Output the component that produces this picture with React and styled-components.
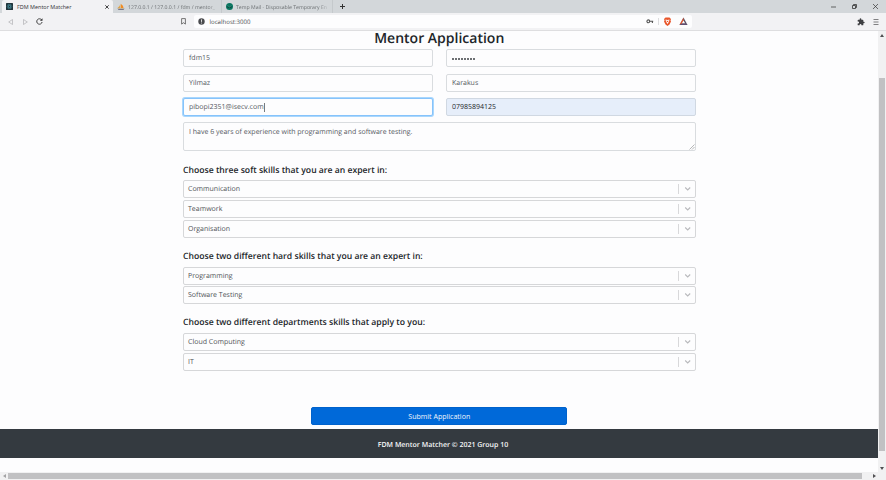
import React from 'react';
import styled, { createGlobalStyle, css } from 'styled-components';

const GlobalStyle = createGlobalStyle`
  * { box-sizing: border-box; }
  html, body { margin: 0; overflow: hidden; }
  body {
    font-family: 'Open Sans', 'Noto Sans', sans-serif;
    color: #212529;
    background: #fdfdfe;
    text-rendering: geometricPrecision;
  }
  svg { display: block; flex: none; }
`;

const Browser = styled.div`
  width: 886px;
  height: 480px;
  display: flex;
  flex-direction: column;
`;

const TabBar = styled.div`
  display: flex;
  flex: none;
  height: 13px;
  background: #d3d7da;
`;

const Tab = styled.div`
  display: flex;
  align-items: center;
  gap: ${(p) => (p.$active ? 4 : 3)}px;
  width: ${(p) => p.$width}px;
  height: 13px;
  padding: 0 4px 0 4px;
  white-space: nowrap;
  font-size: ${(p) => (p.$active ? 5.46 : 5.17)}px;
  color: ${(p) => (p.$active ? '#333437' : '#6c7073')};
  ${(p) =>
    p.$active
      ? css`background: #f2f2f4; border-radius: 2px 2px 0 0; margin-left: 2px;`
      : css`box-shadow: inset -1px 0 #c5c9cc;`}
`;

const TabTitle = styled.span`
  flex: 1;
  padding-top: 1px;
  line-height: 13px;
  ${(p) => p.$fade && css`mask-image: linear-gradient(to right, #000 88%, transparent 102%);`}
`;

const NewTab = styled.div`
  display: flex;
  align-items: center;
  padding-left: 7px;
`;

const WindowControls = styled.div`
  display: flex;
  align-items: center;
  gap: 16px;
  margin-left: auto;
  padding-right: 8px;
`;

const Toolbar = styled.div`
  display: flex;
  align-items: center;
  flex: none;
  height: 18px;
  padding: 0 7px 0 8px;
  background: #f2f2f4;
  border-bottom: 1px solid #dedee0;
`;

const NavButtons = styled.div`
  display: flex;
  align-items: center;
  gap: 8px;
  width: 173px;
`;

const AddressBar = styled.div`
  display: flex;
  align-items: center;
  width: 498px;
  height: 13px;
  margin-left: 8px;
  padding: 0 4px 0 4px;
  border-radius: 2px;
  background: #fdfdfe;
`;

const Url = styled.span`
  margin-left: 4.5px;
  padding-top: 1px;
  font-size: 6.08px;
  line-height: 13px;
  color: #4b4d50;
`;

const AddressIcons = styled.div`
  display: flex;
  align-items: center;
  gap: 4px;
  margin-left: auto;
`;

const IconDivider = styled.div`
  width: 1px;
  height: 7px;
  background: #dcdcde;
`;

const ShieldIcons = styled.div`
  display: flex;
  gap: 7px;
`;

const ToolbarEnd = styled.div`
  display: flex;
  align-items: center;
  gap: 8px;
  margin-left: auto;
`;

const Viewport = styled.div`
  display: flex;
  flex: 1;
  min-height: 0;
`;

const Page = styled.div`
  width: 878px;
  display: flex;
  flex-direction: column;
`;

const Form = styled.form`
  display: flex;
  flex-direction: column;
  width: 512.5px;
  height: 398px;
  margin-left: 183px;
`;

const Title = styled.h1`
  margin: -2px 0 0;
  height: 20px;
  font-size: 14px;
  font-weight: 600;
  line-height: 20px;
  text-align: center;
`;

const FieldGrid = styled.div`
  display: grid;
  grid-template-columns: 250px 249.5px;
  column-gap: 13px;
  grid-template-rows: 25px 24px 18px;
`;

const fieldStyle = css`
  border: 1px solid #d9dcdf;
  border-radius: 2px;
  background: #fdfdfe;
  font-family: inherit;
  font-size: 7px;
  color: #55595e;
`;

const Field = styled.div`
  ${fieldStyle}
  display: flex;
  align-items: center;
  height: 18px;
  padding: 1px 5px 0;
  line-height: 15px;
  ${(p) => p.$masked && css`gap: 1px;`}
  ${(p) => p.$focused && css`border-color: #86c3fb; box-shadow: 0 0 0 1px #a9d7fd;`}
  ${(p) => p.$autofilled && css`background: #e6eefa; border-color: #d0d8e2; color: #25292d;`}
`;

const Caret = styled.span`
  width: 1px;
  height: 9px;
  background: #777b7f;
`;

const PasswordDot = styled.span`
  width: 2px;
  height: 2px;
  border-radius: 50%;
  background: #3c4045;
`;

const Bio = styled.div`
  ${fieldStyle}
  display: flex;
  flex: none;
  justify-content: space-between;
  height: 29px;
  margin-top: 6px;
  padding: 5px 0 0 5px;
  line-height: 10px;
`;

const ResizeGrip = styled.svg`
  align-self: flex-end;
`;

const Section = styled.section`
  display: flex;
  flex-direction: column;
  margin-top: ${(p) => p.$top}px;
`;

const SectionTitle = styled.h2`
  margin: 0 0 ${(p) => p.$after}px;
  font-size: 8.65px;
  font-weight: 600;
  line-height: 12px;
`;

const SelectList = styled.div`
  display: grid;
  row-gap: ${(p) => p.$gap}px;
`;

const SelectBox = styled.div`
  display: flex;
  align-items: center;
  height: 18px;
  padding: 0 3px 0 4px;
  border: 1px solid #d6d7d9;
  border-radius: 2px;
  font-size: 7px;
  line-height: 15px;
  color: #505357;
`;

const SelectValue = styled.span`
  padding-top: 1px;
`;

const SelectDivider = styled.span`
  width: 1px;
  height: 10px;
  margin: 0 5px 0 auto;
  background: #d8d8da;
`;

const SubmitButton = styled.button`
  align-self: center;
  width: 256px;
  height: 18px;
  margin-top: auto;
  margin-bottom: 4px;
  padding: 0;
  border: 1px solid #0062cc;
  border-radius: 2px;
  background: #0069d9;
  color: #f0f6fc;
  font-family: inherit;
  font-size: 7.05px;
  line-height: 15px;
`;

const Footer = styled.footer`
  height: 29px;
  padding: 2px 0 0 8px;
  background: #343a40;
  color: #f7f8f9;
  font-size: 7px;
  font-weight: 600;
  line-height: 29px;
  text-align: center;
`;

const VerticalScroll = styled.div`
  display: flex;
  flex-direction: column;
  align-items: center;
  justify-content: space-between;
  width: 8px;
  padding: 3px 0 2px;
  background: #f1f1f2;
`;

const VerticalThumb = styled.div`
  width: 6px;
  height: 373px;
  margin: 39.5px 0 auto;
  background: #c1c1c3;
`;

const HorizontalScroll = styled.div`
  display: flex;
  align-items: center;
  flex: none;
  height: 8px;
  padding: 0 10px 0 3px;
  background: #f1f1f2;
`;

const HorizontalThumb = styled.div`
  width: 854px;
  height: 6px;
  margin: 0 auto 0 1px;
  background: #c1c1c3;
`;

const Arrow = ({ dir }) => {
  const paths = { up: 'M0 3 2 0l2 3z', down: 'M0 1h4L2 4z', left: 'M3 0v4L0 2z', right: 'M1 0v4l3-2z' };
  return (
    <svg width="4" height="4" viewBox="0 0 4 4">
      <path d={paths[dir]} fill={dir === 'left' ? '#a3a3a5' : '#505052'} />
    </svg>
  );
};

const ReactFavicon = () => (
  <svg width="7" height="7" viewBox="0 0 14 14">
    <rect width="14" height="14" rx="1" fill="#20343b" />
    <g fill="none" stroke="#4e9eac" strokeWidth=".8">
      <ellipse cx="7" cy="7" rx="5" ry="2" />
      <ellipse cx="7" cy="7" rx="5" ry="2" transform="rotate(60 7 7)" />
      <ellipse cx="7" cy="7" rx="5" ry="2" transform="rotate(120 7 7)" />
    </g>
  </svg>
);

const SailFavicon = () => (
  <svg width="8" height="8" viewBox="0 0 16 16">
    <path d="M7 1v9H1Q6 7 7 1z" fill="#dfa44c" />
    <path d="M8 2q5 3 5 8H8z" fill="#f28b22" />
    <path d="M1 11h14l-2 3H3z" fill="#77758a" />
    <path d="M1 11h13" stroke="#e2c481" />
  </svg>
);

const MailFavicon = () => (
  <svg width="7" height="7" viewBox="0 0 14 14">
    <circle cx="7" cy="7" r="7" fill="#08745f" />
    <path d="m3 5 4 3 4-3v5H3z" fill="#0b4d45" />
    <path d="m3 5 4 3 4-3" fill="none" stroke="#48b99c" />
  </svg>
);

const Chevron = () => (
  <svg width="8" height="6" viewBox="0 0 8 6">
    <path d="m1.2 1.5 2.5 2.4 2.5-2.4" fill="none" stroke="#b8b9bc" strokeWidth="1.1" />
  </svg>
);

const Select = ({ value }) => (
  <SelectBox>
    <SelectValue>{value}</SelectValue>
    <SelectDivider />
    <Chevron />
  </SelectBox>
);

const SkillSection = ({ title, options, top = 12, after = 5, gap = 2 }) => (
  <Section $top={top}>
    <SectionTitle $after={after}>{title}</SectionTitle>
    <SelectList $gap={gap}>
      {options.map((option) => <Select key={option} value={option} />)}
    </SelectList>
  </Section>
);

const BrowserTabs = () => (
  <TabBar>
    <Tab $active $width={111}>
      <ReactFavicon />
      <TabTitle>FDM Mentor Matcher</TabTitle>
      <svg width="4" height="4" viewBox="0 0 4 4"><path d="m.3.3 3.4 3.4M3.7.3.3 3.7" stroke="#333" strokeWidth=".9" /></svg>
    </Tab>
    <Tab $width={109}>
      <SailFavicon />
      <TabTitle $fade>127.0.0.1 / 127.0.0.1 / fdm / mentor_</TabTitle>
    </Tab>
    <Tab $width={111}>
      <MailFavicon />
      <TabTitle $fade>Temp Mail - Disposable Temporary En</TabTitle>
    </Tab>
    <NewTab>
      <svg width="5" height="5" viewBox="0 0 5 5"><path d="M2.5 0v5M0 2.5h5" stroke="#333" /></svg>
    </NewTab>
    <WindowControls>
      <svg width="5" height="5" viewBox="0 0 5 5"><path d="M0 3h5" stroke="#444" strokeWidth=".8" /></svg>
      <svg width="5" height="5" viewBox="0 0 5 5"><path d="M.5 1.5h3v3h-3zM1.5 1.5v-1h3v3h-1" fill="none" stroke="#333" strokeWidth=".8" /></svg>
      <svg width="5" height="5" viewBox="0 0 5 5"><path d="m0 0 5 5M5 0 0 5" stroke="#333" strokeWidth=".7" /></svg>
    </WindowControls>
  </TabBar>
);

const BrowserToolbar = () => (
  <Toolbar>
    <NavButtons>
      <svg width="6" height="6" viewBox="0 0 6 6"><path d="M4.5.5v5L.7 3z" fill="none" stroke="#b0b0b3" strokeWidth=".7" /></svg>
      <svg width="6" height="6" viewBox="0 0 6 6"><path d="M1.5.5v5L5.3 3z" fill="none" stroke="#b0b0b3" strokeWidth=".7" /></svg>
      <svg width="7" height="7" viewBox="0 0 7 7"><path d="M5.7 2A2.7 2.7 0 1 0 6.1 4" fill="none" stroke="#333" strokeWidth=".9" /><path d="M6.5.2v2.6H3.9z" fill="#333" /></svg>
    </NavButtons>
    <svg width="5" height="7" viewBox="0 0 5 7"><path d="M.6.6h3.8v5.5L2.5 4.7.6 6.1z" fill="none" stroke="#555" strokeWidth=".8" /></svg>
    <AddressBar>
      <svg width="7" height="7" viewBox="0 0 7 7"><circle cx="3.5" cy="3.5" r="3.2" fill="#4a4b4e" /><path d="M3.5 1.4v2.5M3.5 4.6v.9" stroke="#fff" strokeWidth=".8" /></svg>
      <Url>localhost:3000</Url>
      <AddressIcons>
        <svg width="8" height="5" viewBox="0 0 8 5"><circle cx="2.3" cy="2.3" r="1.4" fill="none" stroke="#555" strokeWidth="1.1" /><path d="M3.6 2.3h3.6M6.4 2.3v1.6" stroke="#555" strokeWidth="1.1" /></svg>
        <IconDivider />
        <ShieldIcons>
          <svg width="9" height="9" viewBox="0 0 18 18"><path d="M5 1h8l3 3-1 3 1 2-3 6-4 3-4-3-3-6 1-2-1-3z" fill="#e9562b" /><path d="m5 5 4 1 4-1-1 4-3 5-3-5z" fill="#fff" /><path d="m7 7 2 1 2-1-1 3H8z" fill="#e9562b" /></svg>
          <svg width="9" height="9" viewBox="0 0 18 18"><path d="m9 1 8 15H1z" fill="#5a5163" /><path d="M9 1 1 16l5-3 3-5z" fill="#e2572f" /><path d="m9 7 3.5 6h-7z" fill="#fff" /><path d="M1 16h16l-4-3H6z" fill="#624f72" /></svg>
        </ShieldIcons>
      </AddressIcons>
    </AddressBar>
    <ToolbarEnd>
      <svg width="8" height="8" viewBox="0 0 24 24"><path fill="#3e3f42" d="M20.5 11H19V7a2 2 0 0 0-2-2h-4V3.5a2.5 2.5 0 0 0-5 0V5H4a2 2 0 0 0-2 2v3.8h1.5a2.7 2.7 0 0 1 0 5.4H2V20a2 2 0 0 0 2 2h3.8v-1.5a2.7 2.7 0 0 1 5.4 0V22H17a2 2 0 0 0 2-2v-4h1.5a2.5 2.5 0 0 0 0-5z" /></svg>
      <svg width="6" height="6" viewBox="0 0 6 6"><path d="M.5.5h5M.5 3h5M.5 5.5h5" stroke="#626265" strokeWidth=".8" /></svg>
    </ToolbarEnd>
  </Toolbar>
);

export default function App() {
  return (
    <Browser>
      <GlobalStyle />
      <BrowserTabs />
      <BrowserToolbar />
      <Viewport>
        <Page>
          <Form>
            <Title>Mentor Application</Title>
            <FieldGrid>
              <Field>fdm15</Field>
              <Field $masked>{Array.from({ length: 8 }, (_, i) => <PasswordDot key={i} />)}</Field>
              <Field>Yilmaz</Field>
              <Field>Karakus</Field>
              <Field $focused>pibopi2351@isecv.com<Caret /></Field>
              <Field $autofilled>07985894125</Field>
            </FieldGrid>
            <Bio>
              I have 6 years of experience with programming and software testing.
              <ResizeGrip width="6" height="6" viewBox="0 0 6 6">
                <path d="M.5 5.5l5-5M3 5.5 5.5 3" stroke="#96989b" strokeWidth=".7" />
              </ResizeGrip>
            </Bio>
            <SkillSection
              title="Choose three soft skills that you are an expert in:"
              options={['Communication', 'Teamwork', 'Organisation']}
              top={13}
              after={4}
            />
            <SkillSection
              title="Choose two different hard skills that you are an expert in:"
              options={['Programming', 'Software Testing']}
              top={12}
              after={5}
              gap={1}
            />
            <SkillSection
              title="Choose two different departments skills that apply to you:"
              options={['Cloud Computing', 'IT']}
            />
            <SubmitButton type="button">Submit Application</SubmitButton>
          </Form>
          <Footer>FDM Mentor Matcher © 2021 Group 10</Footer>
        </Page>
        <VerticalScroll>
          <Arrow dir="up" />
          <VerticalThumb />
          <Arrow dir="down" />
        </VerticalScroll>
      </Viewport>
      <HorizontalScroll>
        <Arrow dir="left" />
        <HorizontalThumb />
        <Arrow dir="right" />
      </HorizontalScroll>
    </Browser>
  );
}
